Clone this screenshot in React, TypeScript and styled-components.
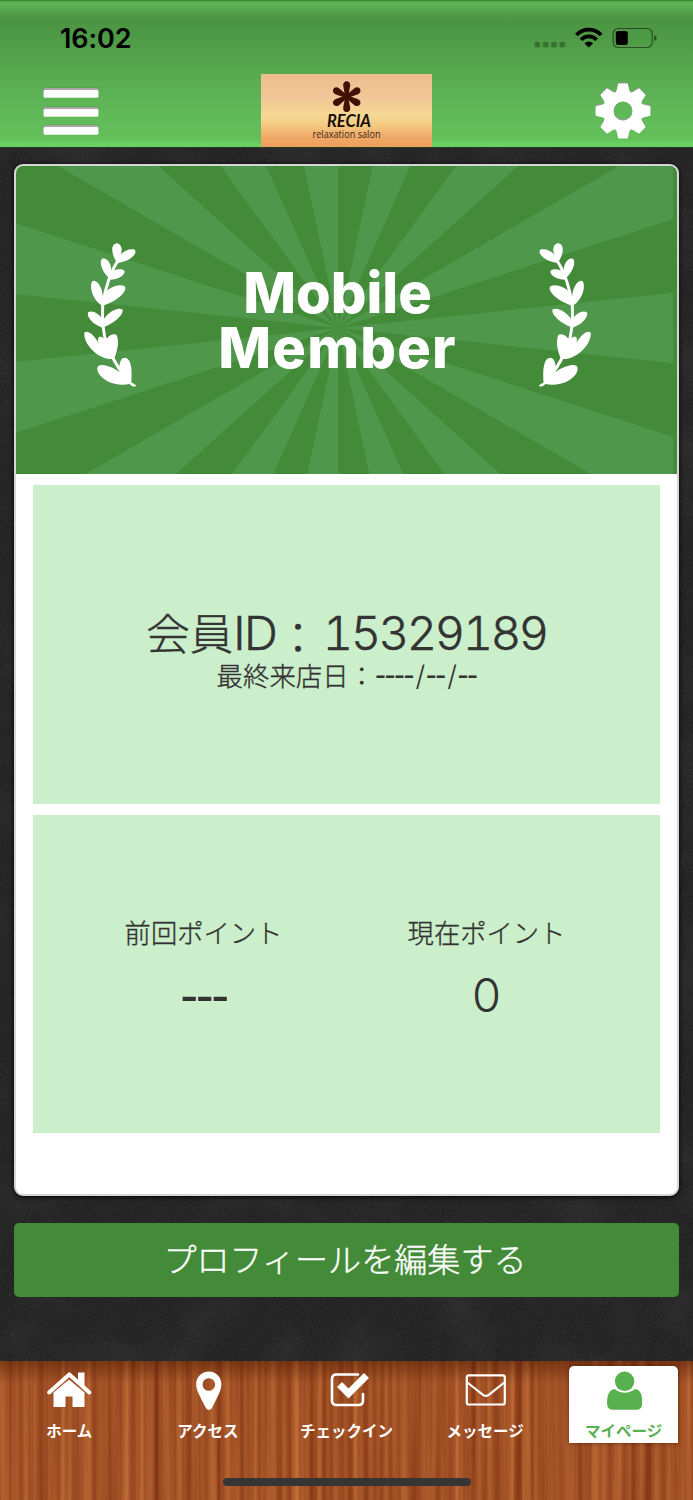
import React from "react";
import styled, { createGlobalStyle } from "styled-components";

const GlobalStyle = createGlobalStyle`
  * { box-sizing: border-box; }
  body {
    margin: 0;
    background: #272727;
    font-family: "Noto Sans CJK JP", "Liberation Sans", sans-serif;
    color: #333;
  }
`;

const Screen = styled.div`
  position: relative;
  isolation: isolate;
  display: flex;
  flex-direction: column;
  width: 693px;
  height: 1500px;
  overflow: hidden;
  background: #272727;
`;

const Texture = styled.svg`
  position: absolute;
  inset: 0;
  width: 100%;
  height: 100%;
  z-index: -1;
`;

const Header = styled.header`
  display: flex;
  flex-direction: column;
  height: 148px;
  border-bottom: 1px solid #1f3a1c;
  background: linear-gradient(
    #3f8539 0, #448c3d 1px, #5fb655 2px, #5db453 5px, #549f4b 12px,
    #4b9443 20px, #4d9845 32px, #55a44d 62px, #5cb054 88px, #61bb58 120px,
    #64c05b 139px, #6bd261 144px, #69d05f 147px
  );
`;

const StatusBar = styled.div`
  display: flex;
  align-items: center;
  justify-content: space-between;
  height: 74px;
  padding: 2px 36px 0 60px;
`;

const Clock = styled.span`
  margin-top: 2px;
  font: 600 27px/32px Inter, sans-serif;
  letter-spacing: -0.1px;
  color: #000;
`;

const Toolbar = styled.div`
  display: grid;
  grid-template-columns: 1fr 171px 1fr;
  height: 73px;
`;

const ToolButton = styled.button<{ $end?: boolean }>`
  display: flex;
  align-items: center;
  justify-content: ${(p) => (p.$end ? "flex-end" : "flex-start")};
  padding: 0 ${(p) => (p.$end ? "40px" : "0")} 0 ${(p) => (p.$end ? "0" : "41px")};
  border: 0;
  background: none;
`;

const Logo = styled.svg`
  display: block;
  width: 171px;
  height: 73px;
`;

const Main = styled.main`
  display: flex;
  flex-direction: column;
  gap: 27px;
  padding: 16px 14px 0;
  flex: 1;
`;

const Card = styled.section`
  display: flex;
  flex-direction: column;
  height: 1032px;
  border: 2px solid #d6d6d6;
  border-radius: 9px;
  background: #fff;
  overflow: hidden;
  box-shadow: 0 1px 5px #000;
`;

const Hero = styled.div`
  position: relative;
  isolation: isolate;
  display: flex;
  align-items: center;
  justify-content: space-between;
  height: 308px;
  padding: 0 84px 11px 66px;
  background: #438b38;
`;

const Burst = styled.svg`
  position: absolute;
  inset: 0;
  z-index: -1;
`;

const Title = styled.h1`
  display: flex;
  flex-direction: column;
  margin: 12px 0 0;
  font: 800 56px/55px Inter, "Liberation Sans", sans-serif;
  text-align: center;
  color: #fff;
`;

const TitleLine = styled.span<{ $tracking?: number }>`
  letter-spacing: ${(p) => p.$tracking ?? 0}px;
`;

const Laurel = styled.svg<{ $flip?: boolean }>`
  width: 56px;
  height: 146px;
  transform: ${(p) => (p.$flip ? "scaleX(-1)" : "none")};
`;

const Panel = styled.div`
  display: flex;
  flex-direction: column;
  align-items: center;
  height: 318.5px;
  margin: 11px 17px 0;
  background: #cbefca;
`;

const MemberId = styled.div`
  display: flex;
  align-items: baseline;
  height: 60px;
  margin-top: 117px;
  font-size: 43.5px;
  font-weight: 300;
  line-height: 60px;
  -webkit-text-stroke: 0.4px #333;
`;

const Colon = styled.span`
  align-self: flex-start;
  line-height: 68px;
`;

const Digits = styled.span<{ $number?: boolean }>`
  margin-left: ${(p) => (p.$number ? 3 : 0)}px;
  font-family: Inter, sans-serif;
  font-size: 47px;
  font-weight: 300;
  font-feature-settings: "tnum";
  letter-spacing: ${(p) => (p.$number ? -2.4 : -1.6)}px;
`;

const LastVisit = styled.div`
  display: flex;
  align-items: baseline;
  height: 34px;
  margin-top: -4px;
  font-size: 26.4px;
  font-weight: 300;
  line-height: 34px;
  -webkit-text-stroke: 0.35px #333;
`;

const Dashes = styled.span`
  font-family: "Liberation Sans", sans-serif;
  font-size: 33px;
  letter-spacing: -1.5px;
  -webkit-text-stroke: 0;
`;

const Slash = styled.span`
  margin: 0 2px 0 2.5px;
  font-family: Inter, sans-serif;
  font-size: 28px;
  font-weight: 300;
`;

const Points = styled.div`
  display: grid;
  grid-template-columns: 283px 283px;
  padding: 98px 3px 0 0;
`;

const Point = styled.div`
  display: flex;
  flex-direction: column;
  align-items: center;
`;

const PointLabel = styled.span`
  font-size: 26.3px;
  font-weight: 300;
  line-height: 38px;
  -webkit-text-stroke: 0.35px #333;
`;

const PointValue = styled.span<{ $empty?: boolean }>`
  margin-top: ${(p) => (p.$empty ? 13 : 14)}px;
  font-family: ${(p) => (p.$empty ? '"Liberation Sans"' : "Inter")}, sans-serif;
  font-size: ${(p) => (p.$empty ? 54 : 47)}px;
  font-weight: 300;
  line-height: 60px;
  letter-spacing: ${(p) => (p.$empty ? -2.4 : 0)}px;
`;

const EditButton = styled.button`
  height: 74px;
  padding: 0 3px 5px 0;
  border: 0;
  border-radius: 5px;
  background: #438b38;
  color: #fff;
  font: 300 33.1px/44px "Noto Sans CJK JP", sans-serif;
  -webkit-text-stroke: 0.35px #fff;
`;

const TabBar = styled.nav`
  position: relative;
  isolation: isolate;
  display: flex;
  flex-direction: column;
  align-items: center;
  height: 139px;
  background: #a25327;
`;

const TabShade = styled.div`
  position: absolute;
  inset: 0 0 auto;
  height: 22px;
  z-index: -1;
  background: linear-gradient(rgba(70, 20, 0, 0.45), rgba(70, 20, 0, 0));
`;

const Tabs = styled.div`
  display: grid;
  grid-template-columns: repeat(5, 1fr);
  width: 100%;
  height: 82px;
  padding-top: 5px;
`;

const Tab = styled.a<{ $active?: boolean }>`
  display: flex;
  flex-direction: column;
  align-items: center;
  width: 109px;
  height: 77px;
  padding-top: 4px;
  justify-self: center;
  border-radius: 5px 5px 0 0;
  color: ${(p) => (p.$active ? "#58b04f" : "#fff")};
  background: ${(p) => (p.$active ? "#fff" : "none")};
  box-shadow: ${(p) => (p.$active ? "0 0 4px rgba(60,15,0,.6)" : "none")};
`;

const TabIcon = styled.svg`
  width: 50px;
  height: 48px;
  fill: currentColor;
`;

const TabLabel = styled.span`
  font-size: 15.5px;
  font-weight: 700;
  line-height: 24px;
  white-space: nowrap;
`;

const HomeIndicator = styled.div`
  width: 248px;
  height: 8px;
  margin-top: 35px;
  border-radius: 4px;
  background: #373534;
`;

const CX = 322.3;
const CY = 162;
const rays = Array.from({ length: 15 }, (_, i) => {
  const point = (deg: number) => {
    const a = (deg * Math.PI) / 180;
    return `${(CX + 600 * Math.sin(a)).toFixed(1)},${(CY - 600 * Math.cos(a)).toFixed(1)}`;
  };
  return `${CX},${CY} ${point(12 + i * 24)} ${point(24 + i * 24)}`;
});

function Sunburst() {
  return (
    <Burst width="657" height="308">
      {rays.map((points) => (
        <polygon key={points} points={points} fill="#4f974a" />
      ))}
    </Burst>
  );
}

function LaurelBranch({ flip }: { flip?: boolean }) {
  return (
    <Laurel $flip={flip} viewBox="246 245 168 438">
      <g fill="#fff">
        <path d="M353 308C334 286 330 251 350 249C366 250 368 271 362 283C373 270 391 264 404 268C412 276 400 290 385 298C374 303 363 306 353 308Z" />
        <path d="M333 358C306 338 296 303 306 295C322 290 336 312 334 336C344 326 364 324 373 331C378 340 360 356 333 358Z" />
        <path d="M308 436C277 422 266 373 278 362C293 357 308 386 308 407C322 382 356 368 374 378C386 393 345 427 308 436Z" />
        <path d="M307 502C281 494 259 471 264 456C279 447 301 463 309 480C321 459 351 439 367 447C374 462 341 491 307 502Z" />
        <path d="M342 596C297 601 249 551 253 517C264 507 285 528 296 548C292 536 295 528 301 529C309 528 313 535 316 543C323 525 343 516 351 526C358 548 352 571 342 596Z" />
        <path d="M389 671C350 680 306 662 294 635C286 614 303 611 320 616C336 620 349 627 359 636C356 616 360 593 373 592C395 592 397 631 394 666L408 675C407 681 397 680 389 671Z" />
      </g>
      <path
        d="M358 292Q319 355 308 435Q305 500 319 550Q339 601 368 640"
        fill="none" stroke="#fff" strokeWidth="9"
      />
    </Laurel>
  );
}

function MenuIcon() {
  return (
    <svg width="60" height="54" viewBox="0 0 60 54">
      {[5, 24, 42].map((y) => (
        <g key={y}>
          <rect x="2" y={y - 1.5} width="56" height="10.5" rx="2.5" fill="#347b32" opacity=".35" />
          <rect x="2.5" y={y - 1} width="55" height="5" rx="1.5" fill="#aaa4a9" />
          <rect x="2.5" y={y + 1} width="55" height="7.8" rx="1.5" fill="#fff" />
        </g>
      ))}
    </svg>
  );
}

function GearIcon() {
  return (
    <svg width="60" height="60" viewBox="-30 -30 60 60">
      <g fill="#fff" filter="drop-shadow(0 -1px 0.6px #999)">
        {[0, 45, 90, 135, 180, 225, 270, 315].map((a) => (
          <path
            key={a}
            transform={`rotate(${a})`}
            d="M-8 -17L-6.2 -21L-5 -26.5Q-4.8 -27.4 -4 -27.4H4Q4.8 -27.4 5 -26.5L6.2 -21L8 -17Z"
          />
        ))}
        <path
          fillRule="evenodd"
          d="M0-20A20 20 0 1 1 0 20A20 20 0 1 1 0-20ZM0-9.5A9.5 9.5 0 1 0 0 9.5A9.5 9.5 0 1 0 0-9.5Z"
        />
      </g>
    </svg>
  );
}

function StatusIcons() {
  return (
    <svg width="124" height="24" viewBox="533 26 124 24">
      {[537.3, 545.7, 554, 562.3].map((x) => (
        <rect key={x} x={x - 2.9} y="41.8" width="5.8" height="5.8" rx="2" fill="#000" opacity=".28" />
      ))}
      <g fill="none" stroke="#000" strokeWidth="3.8">
        <path d="M576.4 35A17.2 17.2 0 0 1 601.2 35" />
        <path d="M581 39.7A10.7 10.7 0 0 1 596.6 39.7" />
      </g>
      <path d="M584.4 43.2Q588.8 39.6 593.2 43.2L588.8 47.4Z" />
      <rect x="613.2" y="28.5" width="39" height="19" rx="5" fill="none" stroke="#000" strokeOpacity=".48" strokeWidth="1.2" />
      <path d="M654.2 35Q659.4 38 654.2 41Z" opacity=".5" />
      <rect x="615.8" y="31" width="12" height="14" rx="2.5" />
    </svg>
  );
}

function SalonLogo() {
  return (
    <Logo viewBox="0 0 171 73">
      <defs>
        <linearGradient id="logoBg" x2="0" y2="1">
          <stop offset="0" stopColor="#edbd8e" />
          <stop offset=".34" stopColor="#f2c798" />
          <stop offset=".56" stopColor="#f5d994" />
          <stop offset=".68" stopColor="#f4cd85" />
          <stop offset=".88" stopColor="#efa765" />
          <stop offset="1" stopColor="#ef9f5d" />
        </linearGradient>
      </defs>
      <rect width="171" height="73" fill="url(#logoBg)" />
      <g transform="translate(85.7 22.7)" fill="#421006">
        {[0, 60, 120, 180, 240, 300].map((a) => (
          <path key={a} transform={`rotate(${a})`} d="M-1.3 1L-3.4-10.5C-4.4-17 4.4-17 3.4-10.5L1.3 1Z" />
        ))}
      </g>
      <text x="66" y="53" textLength="44" lengthAdjust="spacingAndGlyphs" fontFamily="Lato" fontStyle="italic" fontWeight="700" fontSize="16.5" fill="#160d05">RECIA</text>
      <text x="51.5" y="63.5" textLength="68" lengthAdjust="spacingAndGlyphs" fontFamily="Open Sans" fontSize="11.5" fill="#3c2514">relaxation salon</text>
    </Logo>
  );
}

function SlateTexture() {
  return (
    <Texture>
      <filter id="slateFine" x="0" y="0" width="100%" height="100%">
        <feTurbulence type="fractalNoise" baseFrequency=".55" numOctaves="2" seed="4" />
        <feColorMatrix values="0 0 0 0 1  0 0 0 0 1  0 0 0 0 1  .5 0 0 0 -.19" />
      </filter>
      <filter id="slateCloud" x="0" y="0" width="100%" height="100%">
        <feTurbulence type="fractalNoise" baseFrequency=".018" numOctaves="3" seed="9" />
        <feColorMatrix values="0 0 0 0 1  0 0 0 0 1  0 0 0 0 1  .35 0 0 0 -.15" />
      </filter>
      <rect width="100%" height="100%" fill="#232323" />
      <rect width="100%" height="100%" filter="url(#slateFine)" opacity=".22" />
      <rect width="100%" height="100%" filter="url(#slateCloud)" opacity=".25" />
    </Texture>
  );
}

function WoodTexture() {
  return (
    <Texture>
      <filter id="wood" x="0" y="0" width="100%" height="100%" colorInterpolationFilters="sRGB">
        <feTurbulence type="fractalNoise" baseFrequency=".13 .0015" numOctaves="3" seed="7" />
        <feColorMatrix values=".38 0 0 0 .44  .34 0 0 0 .145  .22 0 0 0 .035  0 0 0 0 1" />
      </filter>
      <rect width="100%" height="100%" filter="url(#wood)" />
    </Texture>
  );
}

const tabs = [
  {
    label: "ホーム",
    icon: (
      <>
        <path d="M5.1 22.4L25.3 4.4L45.4 22.4" fill="none" stroke="currentColor" strokeWidth="4" strokeLinecap="round" strokeLinejoin="round" />
        <path d="M34 2.5H40.5V17L34 11Z" />
        <path d="M9.5 22.5L25 9.5L40.5 22.5V37H28.5V26.5H21.5V37H9.5Z" />
      </>
    ),
  },
  {
    label: "アクセス",
    icon: (
      <path fillRule="evenodd" d="M26 1.5C18.5 1.5 13.2 7.2 13.2 14C13.2 20 16 24.5 23 38.2Q25.8 41.7 28.8 38.2C35.8 24.5 38.4 20 38.4 14C38.4 7.2 33 1.5 26 1.5ZM25.8 8.2A6.3 6.3 0 1 1 25.8 20.8A6.3 6.3 0 1 1 25.8 8.2Z" />
    ),
  },
  {
    label: "チェックイン",
    icon: (
      <>
        <path d="M37 4.5H15.5Q11 4.5 11 9V30.5Q11 35 15.5 35H37.5Q42 35 42 30.5V24" fill="none" stroke="currentColor" strokeWidth="2.6" strokeLinecap="round" />
        <path d="M18.5 14.5L27.5 23.5L45.5 5.5" fill="none" stroke="currentColor" strokeWidth="7" />
      </>
    ),
  },
  {
    label: "メッセージ",
    icon: (
      <g fill="none" stroke="currentColor" strokeWidth="2.2">
        <rect x="6.8" y="5.3" width="38" height="29.2" rx="2" />
        <path d="M7.3 12.5L22.1 24.2Q25.9 27.6 29.7 24.2L44.3 12.5" />
      </g>
    ),
  },
  {
    label: "マイページ",
    active: true,
    icon: (
      <>
        <circle cx="25.6" cy="11.3" r="9.7" />
        <path d="M15.6 19Q25.3 26.5 36.2 19Q41.8 19.5 43 27.5Q43.4 31 43 35Q42.4 39.8 37.4 39.8H13.9Q8.9 39.8 8.2 35Q7.7 31 8.4 27.5Q9.9 19.5 15.6 19Z" />
      </>
    ),
  },
];

export default function App() {
  return (
    <Screen>
      <GlobalStyle />
      <SlateTexture />
      <Header>
        <StatusBar>
          <Clock>16:02</Clock>
          <StatusIcons />
        </StatusBar>
        <Toolbar>
          <ToolButton aria-label="メニュー">
            <MenuIcon />
          </ToolButton>
          <SalonLogo />
          <ToolButton $end aria-label="設定">
            <GearIcon />
          </ToolButton>
        </Toolbar>
      </Header>
      <Main>
        <Card>
          <Hero>
            <Sunburst />
            <LaurelBranch />
            <Title>
              <TitleLine>Mobile</TitleLine>
              <TitleLine $tracking={1.2}>Member</TitleLine>
            </Title>
            <LaurelBranch flip />
          </Hero>
          <Panel>
            <MemberId>
              会員<Digits>ID</Digits>
              <Colon>：</Colon>
              <Digits $number>15329189</Digits>
            </MemberId>
            <LastVisit>
              最終来店日：
              <Dashes>
                ----<Slash>/</Slash>--<Slash>/</Slash>--
              </Dashes>
            </LastVisit>
          </Panel>
          <Panel>
            <Points>
              <Point>
                <PointLabel>前回ポイント</PointLabel>
                <PointValue $empty>---</PointValue>
              </Point>
              <Point>
                <PointLabel>現在ポイント</PointLabel>
                <PointValue>0</PointValue>
              </Point>
            </Points>
          </Panel>
        </Card>
        <EditButton>プロフィールを編集する</EditButton>
      </Main>
      <TabBar>
        <WoodTexture />
        <TabShade />
        <Tabs>
          {tabs.map((tab) => (
            <Tab key={tab.label} $active={tab.active}>
              <TabIcon viewBox="0 0 50 48">{tab.icon}</TabIcon>
              <TabLabel>{tab.label}</TabLabel>
            </Tab>
          ))}
        </Tabs>
        <HomeIndicator />
      </TabBar>
    </Screen>
  );
}
